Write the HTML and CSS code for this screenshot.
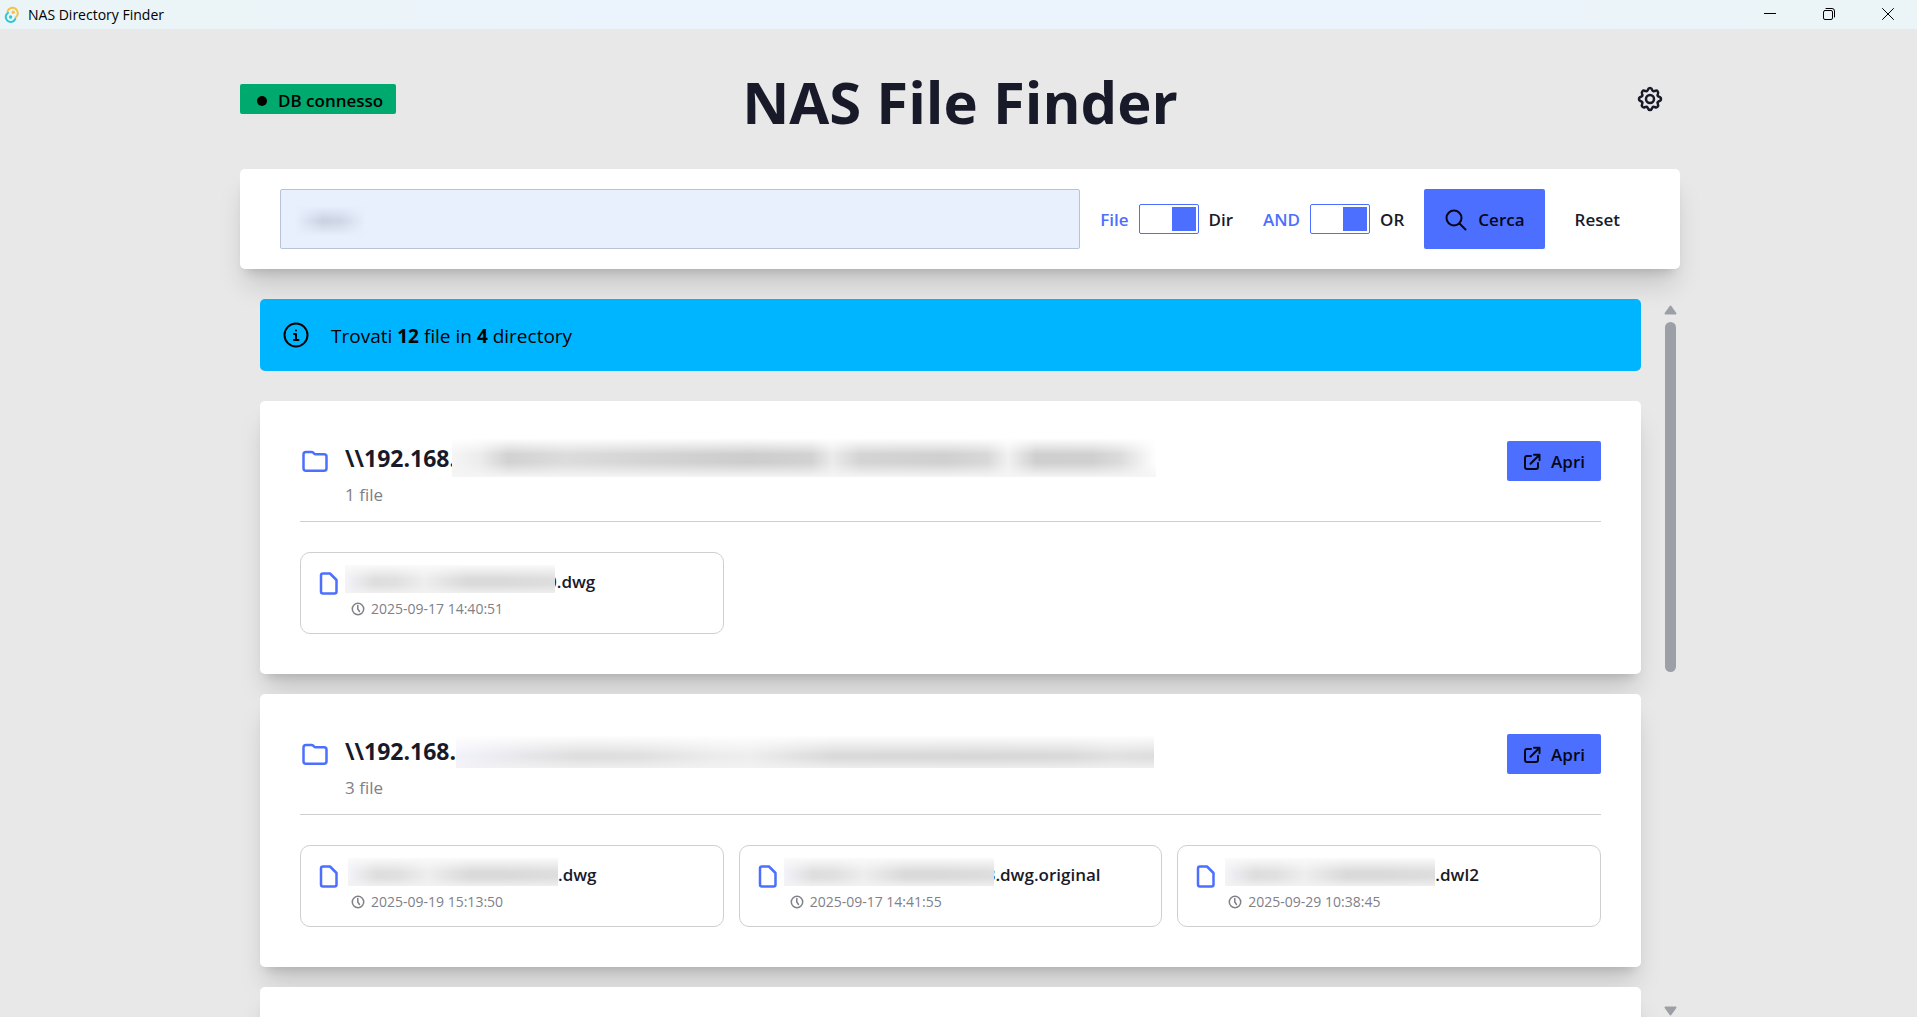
FILE: index.html
```html
<!DOCTYPE html>
<html lang="it">
<head>
<meta charset="utf-8">
<title>NAS Directory Finder</title>
<link rel="stylesheet" href="styles.css">
</head>
<body>
<svg class="sprite" aria-hidden="true">
  <symbol id="folder" viewBox="0 0 30 30"><path d="M6 6h5.500q1 0 1.700.7l.9.900q.7.700 1.700.7H24q2.500 0 2.500 2.500v11.500q0 2.500-2.500 2.500H6q-2.500 0-2.500-2.500V8.500Q3.500 6 6 6z"/></symbol>
  <symbol id="file" viewBox="0 0 20 24"><path d="M4 2.500h7L17.500 9v11.500q0 2-2 2H4q-2 0-2-2v-16q0-2 2-2z"/></symbol>
  <symbol id="clock" viewBox="0 0 14 14"><circle cx="7" cy="7" r="5.700"/><path d="M6.800 3.500V7l1.700 2.500"/></symbol>
  <symbol id="open" viewBox="0 0 18 18"><path d="M8 3H4Q2 3 2 5v9q0 2 2 2h9q2 0 2-2v-4M11 1.800h5.500v5.500M16.300 2 7.500 10.800"/></symbol>
</svg>

<header class="titlebar">
  <svg class="logo" viewBox="0 0 18 18" aria-hidden="true">
    <path class="logo-gold" d="M4.500 5.500A5.300 5.300 0 1 1 12.500 11.500"/><circle class="logo-gold-dot" cx="10.200" cy="6.300" r="1.700"/>
    <path class="logo-cyan" d="M5 6.800A5 5 0 1 0 12.300 13"/><circle class="logo-cyan-dot" cx="7.600" cy="11" r="1.700"/>
  </svg>
  <span class="app-name">NAS Directory Finder</span>
  <div class="window-controls">
    <button type="button" aria-label="Riduci a icona"><svg viewBox="0 0 12 12"><path d="M0 5.500h12"/></svg></button>
    <button type="button" aria-label="Ripristina"><svg viewBox="0 0 12 12"><rect x=".5" y="2.500" width="9" height="9" rx="1.500"/><path d="M3 .5h6q2.500 0 2.500 2.500v6"/></svg></button>
    <button type="button" aria-label="Chiudi"><svg viewBox="0 0 12 12"><path d="M.5.5l11 11M11.500.5l-11 11"/></svg></button>
  </div>
</header>

<main class="page">
  <div class="heading">
    <span class="status"><span class="dot"></span>DB connesso</span>
    <h1>NAS File Finder</h1>
    <button class="settings" type="button" aria-label="Impostazioni">
      <svg viewBox="0 0 26 26"><path d="M13 2c1.600 0 2 1.200 2.400 2.300.5 1.100 1.300 1.200 2.300.7 1.300-.6 2.200-.6 2.900.2s.8 1.700.2 3c-.5 1-.3 1.900.8 2.300 1.200.4 2.400.9 2.400 2.500s-1.200 2.100-2.400 2.500c-1.100.4-1.300 1.300-.8 2.300.6 1.300.5 2.200-.2 3s-1.600.8-2.900.2c-1-.5-1.800-.4-2.300.7C15 22.800 14.600 24 13 24s-2-1.200-2.400-2.300c-.5-1.100-1.300-1.200-2.300-.7-1.300.6-2.200.6-2.900-.2s-.8-1.700-.2-3c.5-1 .3-1.900-.8-2.300C3.200 15.100 2 14.600 2 13s1.200-2.100 2.400-2.500c1.100-.4 1.300-1.300.8-2.300-.6-1.300-.5-2.200.2-3s1.600-.8 2.900-.2c1 .5 1.800.4 2.300-.7C11 3.200 11.400 2 13 2z"/><circle cx="13" cy="13" r="4"/></svg>
    </button>
  </div>

  <form class="search">
    <div class="query"><input type="text" aria-label="Cerca"><span class="smudge smudge-query"></span></div>
    <div class="modes">
      <div class="mode"><label class="on" for="kind">File</label><input class="toggle" id="kind" type="checkbox" checked><label for="kind">Dir</label></div>
      <div class="mode"><label class="on" for="logic">AND</label><input class="toggle" id="logic" type="checkbox" checked><label for="logic">OR</label></div>
    </div>
    <div class="actions">
      <button class="submit" type="button"><svg viewBox="0 0 24 24"><circle cx="10" cy="10" r="7.500"/><path d="M15.500 15.500l6 6"/></svg>Cerca</button>
      <button class="reset" type="reset">Reset</button>
    </div>
  </form>

  <div class="results">
    <div class="list">
      <p class="alert"><svg viewBox="0 0 26 26"><circle cx="13" cy="13" r="11.500"/><path d="M11 12h2v6M11 18h4.500"/><circle class="point" cx="13" cy="8.500" r="1"/></svg><span>Trovati <b>12</b> file in <b>4</b> directory</span></p>

      <section class="card">
        <div class="card-head">
          <svg class="folder"><use href="#folder"/></svg>
          <div class="path"><h2>\\192.168.<span class="smudge smudge-path over"></span></h2><p>1 file</p></div>
          <button class="open" type="button"><svg><use href="#open"/></svg>Apri</button>
        </div>
        <div class="files">
          <article class="file"><svg class="doc"><use href="#file"/></svg><div><h3><span class="smudge smudge-name over"></span>0.dwg</h3><p><svg><use href="#clock"/></svg>2025-09-17 14:40:51</p></div></article>
        </div>
      </section>

      <section class="card">
        <div class="card-head">
          <svg class="folder"><use href="#folder"/></svg>
          <div class="path"><h2>\\192.168.<span class="smudge smudge-path even"></span></h2><p>3 file</p></div>
          <button class="open" type="button"><svg><use href="#open"/></svg>Apri</button>
        </div>
        <div class="files">
          <article class="file"><svg class="doc"><use href="#file"/></svg><div><h3><span class="smudge smudge-name"></span>.dwg</h3><p><svg><use href="#clock"/></svg>2025-09-19 15:13:50</p></div></article>
          <article class="file"><svg class="doc"><use href="#file"/></svg><div><h3><span class="smudge smudge-name over"></span>3.dwg.original</h3><p><svg><use href="#clock"/></svg>2025-09-17 14:41:55</p></div></article>
          <article class="file"><svg class="doc"><use href="#file"/></svg><div><h3><span class="smudge smudge-name"></span>.dwl2</h3><p><svg><use href="#clock"/></svg>2025-09-29 10:38:45</p></div></article>
        </div>
      </section>

      <section class="card"></section>
    </div>
    <div class="scrollbar" aria-hidden="true">
      <svg viewBox="0 0 13 10"><path d="M6.500 1.500 11.500 8.500h-10z"/></svg>
      <div class="track"><div class="thumb"></div></div>
      <svg viewBox="0 0 13 10"><path d="M6.500 8.500 11.500 1.500h-10z"/></svg>
    </div>
  </div>
</main>
</body>
</html>
```

FILE: styles.css
```css
:root {
  --ink: #181a2a;
  --primary: #4c6fff;
  --line: #cfcfcf;
  --muted: #808088;
  --shadow: 0 20px 25px -5px rgb(0 0 0 / 15%), 0 8px 10px -6px rgb(0 0 0 / 15%);
}

* { box-sizing: border-box; }
h1, h2, h3, p { margin: 0; }
button { border: 0; background: none; padding: 0; font: inherit; color: inherit; cursor: pointer; }
svg { fill: none; stroke: currentColor; stroke-width: 2; stroke-linecap: round; stroke-linejoin: round; flex: none; }
.sprite { position: absolute; width: 0; height: 0; }

body {
  margin: 0;
  height: 100vh;
  display: flex;
  flex-direction: column;
  overflow: hidden;
  background: #e8e8e8;
  color: var(--ink);
  font: 17px/24px "Open Sans", "Noto Sans", sans-serif;
}

/* Window title bar */
.titlebar {
  flex: none;
  height: 29px;
  display: flex;
  align-items: center;
  padding-left: 3px;
  background: linear-gradient(90deg, #ebf5f7 10%, #ebf3fc 30%, #ebf3fc 74%, #ebf5f7 95%);
  color: #000;
  font-size: 14px;
}
.logo { width: 18px; height: 18px; }
.logo-gold { stroke: #f6c244; }
.logo-cyan { stroke: #32c5d6; }
.logo-gold-dot { fill: #f6c244; stroke: none; }
.logo-cyan-dot { fill: #32c5d6; stroke: none; }
.app-name { margin-left: 7px; }
.window-controls { margin-left: auto; display: flex; height: 100%; }
.window-controls button { width: 59px; }
.window-controls svg { width: 12px; height: 12px; stroke-width: 1; }

.page {
  flex: 1;
  min-height: 0;
  display: flex;
  flex-direction: column;
  padding: 40px 237px 0 240px;
}

.heading { display: grid; grid-template-columns: 1fr auto 1fr; height: 100px; }
.status {
  justify-self: start;
  height: 30px;
  margin-top: 15px;
  padding: 3px 13px 0 17px;
  display: flex;
  align-items: center;
  border-radius: 2px;
  background: #00a96e;
  color: #000;
  font-weight: 600;
}
.dot { width: 10px; height: 10px; margin-right: 11px; border-radius: 50%; background: #000; }
h1 { font-size: 58px; line-height: 66px; font-weight: 700; }
.settings { justify-self: end; align-self: start; height: 60px; padding: 0 17px; }
.settings svg { width: 26px; height: 26px; display: block; stroke-width: 2.5; }

.search {
  flex: none;
  display: flex;
  gap: 20px;
  padding: 20px 40px;
  border-radius: 5px;
  background: #fff;
  box-shadow: var(--shadow);
  font-weight: 600;
}
.query { flex: 1; display: grid; align-items: center; }
.query > * { grid-area: 1 / 1; }
.query input {
  width: 100%;
  height: 60px;
  padding: 0 20px;
  border: 1px solid #b9c3d6;
  border-radius: 2px;
  background: #e8f0fe;
  font: inherit;
}
.modes { display: flex; align-items: center; gap: 30px; }
.mode { display: flex; align-items: center; gap: 10px; }
.mode label { padding-top: 2px; }
.on { color: var(--primary); }
.toggle {
  appearance: none;
  width: 60px;
  height: 30px;
  margin: 0;
  border: 1px solid var(--primary);
  border-radius: 2px;
  padding: 2px;
  display: flex;
  justify-content: flex-end;
}
.toggle::before { content: ""; width: 24px; background: var(--primary); }
.actions { display: flex; gap: 10px; }
.submit, .reset { height: 60px; padding: 1px 20px 0; display: flex; align-items: center; border-radius: 2px; }
.submit { gap: 10px; background: var(--primary); color: #050617; }
.submit svg { width: 24px; height: 24px; }

.results { flex: 1; min-height: 0; display: flex; overflow: hidden; padding: 30px 0 0 20px; }
.list { flex: 1; display: flex; flex-direction: column; gap: 20px; }
.alert {
  display: flex;
  align-items: center;
  gap: 22px;
  height: 72px;
  flex: none;
  margin-bottom: 10px;
  padding: 0 23px;
  border-radius: 5px;
  background: #00b5ff;
  color: #000;
  font-size: 19px;
}
.alert svg { width: 26px; height: 26px; }
.alert span { padding-top: 2px; }
.point { fill: currentColor; stroke: none; }

.card { flex: none; min-height: 273px; padding: 40px; border-radius: 5px; background: #fff; box-shadow: var(--shadow); }
.card-head { display: flex; height: 81px; border-bottom: 1px solid var(--line); }
.folder { width: 30px; height: 30px; margin-top: 5px; color: var(--primary); stroke-width: 2.5; }
.path { flex: 1; padding-left: 15px; }
h2 { height: 40px; font-size: 23px; line-height: 35px; font-weight: 700; white-space: nowrap; display: flex; }
.path p { line-height: 28px; color: var(--muted); }
.open {
  height: 40px;
  padding: 1px 16px 0;
  display: flex;
  align-items: center;
  gap: 10px;
  border-radius: 2px;
  background: var(--primary);
  color: #050617;
  font-weight: 600;
}
.open svg { width: 18px; height: 18px; }

.files { display: grid; grid-template-columns: repeat(3, 1fr); gap: 15px; padding-top: 30px; }
.file { display: flex; gap: 6px; height: 82px; padding: 12px 18px; border: 1px solid var(--line); border-radius: 10px; }
.doc { width: 20px; height: 24px; margin-top: 6px; color: var(--primary); stroke-width: 2.5; }
h3 { height: 30px; display: flex; font-size: 17px; line-height: 34px; font-weight: 600; }
.file p { display: flex; align-items: center; gap: 6px; padding-left: 6px; font-size: 14px; line-height: 28px; color: var(--muted); }
.file p svg { width: 14px; height: 14px; stroke-width: 1.5; }

/* Obscured text */
.smudge { display: inline-block; flex: none; }
.smudge-query {
  width: 72px;
  height: 30px;
  margin: 4px 0 0 14px;
  background: linear-gradient(90deg, #e8f0fe, #ccd3e2 40%, #d0d7e6 65%, #e8f0fe);
  mask: linear-gradient(transparent, #000 45%, #000 55%, transparent);
}
.smudge-path {
  width: 704px;
  height: 41px;
  margin-top: -5px;
  background:
    linear-gradient(#fff 5%, transparent 45%, transparent 65%, #f5f5f5 100%),
    linear-gradient(90deg, #f5f5f5, #ececec 4%, #d2d2d2 8%, #dcdcdc 16%, #d4d4d4 28%, #cdcdcd 42%, #d2d2d2 51%, #ebebeb 54%, #d4d4d4 58%, #d0d0d0 70%, #d8d8d8 76%, #f1f1f1 79%, #cfcfcf 83%, #d0d0d0 91%, #dcdcdc 95%, #fff);
}
.smudge-path.over { margin-left: -4px; }
.smudge-path.even {
  width: 698px;
  height: 33px;
  margin-top: 1px;
  background:
    linear-gradient(#fff, transparent 60%, transparent 70%, #f3f3f3cc 100%),
    linear-gradient(90deg, #f2f2fb, #dedede 18%, #e0e0e0 26%, #ececec 37%, #eeeeee 42%, #dadada 54%, #d8d8d8 75%, #dadada 88%, #e2e2e2 94%, #dedede);
}
.smudge-name {
  width: 210px;
  height: 28px;
  margin-left: 3px;
  background:
    linear-gradient(#fafafa, transparent 50%, transparent 70%, #f3f3f3cc 100%),
    linear-gradient(90deg, #f3f3f9, #dedede 14%, #e0e0e0 24%, #eeeeee 38%, #dadada 58%, #dadada 75%, #dedede);
}
.over { position: relative; }
.smudge-name.over { margin: 0 -8px 0 0; }

/* Results scrollbar */
.scrollbar { width: 35px; padding: 6px 0 1px 16px; display: flex; flex-direction: column; align-items: center; margin-left: 4px; color: #9d9fa6; }
.scrollbar svg { width: 13px; height: 10px; fill: currentColor; }
.track { flex: 1; min-height: 0; padding: 7px 0; }
.thumb { width: 11px; height: 350px; border-radius: 6px; background: currentColor; }
```
